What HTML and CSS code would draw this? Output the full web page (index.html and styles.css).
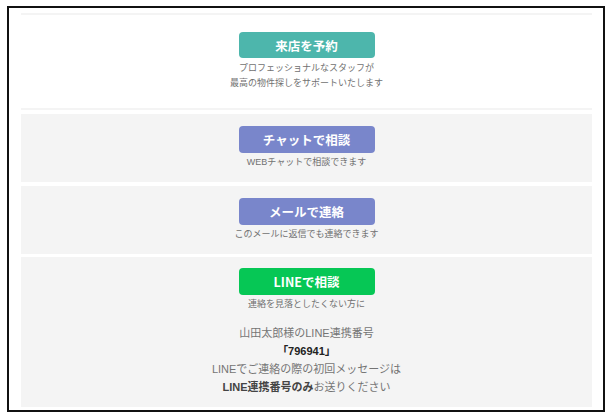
FILE: index.html
```html
<!DOCTYPE html>
<html lang="ja">
<head>
<meta charset="utf-8">
<link rel="stylesheet" href="styles.css">
</head>
<body>
<div class="frame">
  <div class="visit">
    <a class="btn btn-teal">来店を予約</a>
    <p class="sub">プロフェッショナルなスタッフが<br>最高の物件探しをサポートいたします</p>
  </div>
  <div class="cards">
    <div class="card">
      <a class="btn btn-indigo">チャットで相談</a>
      <p class="sub">WEBチャットで相談できます</p>
    </div>
    <div class="card">
      <a class="btn btn-indigo">メールで連絡</a>
      <p class="sub">このメールに返信でも連絡できます</p>
    </div>
    <div class="card">
      <a class="btn btn-line">LINEで相談</a>
      <p class="sub">連絡を見落としたくない方に</p>
      <div class="info">
        <p>山田太郎様のLINE連携番号</p>
        <p class="code">「796941」</p>
        <p>LINEでご連絡の際の初回メッセージは</p>
        <p><strong>LINE連携番号のみ</strong>お送りください</p>
      </div>
    </div>
  </div>
</div>
</body>
</html>
```
FILE: styles.css
```css
html, body {
  margin: 0;
  padding: 0;
  background: #fff;
}
body {
  font-family: "Liberation Sans", "Noto Sans CJK JP", sans-serif;
  color: #666;
}
.frame {
  margin: 6px 0 0 7px;
  width: 598px;
  height: 406px;
  box-sizing: border-box;
  border: 2px solid #111;
  padding: 5px 11px 0 12px;
}
.visit {
  border-top: 2px solid #f4f4f4;
  border-bottom: 2px solid #f4f4f4;
  padding: 17px 0 17px;
  display: flex;
  flex-direction: column;
  align-items: center;
}
.cards {
  margin-top: 4px;
  display: flex;
  flex-direction: column;
  gap: 3.5px;
}
.card {
  background: #f4f4f4;
  padding: 12px 0 12px;
  display: flex;
  flex-direction: column;
  align-items: center;
}
.card:last-child {
  padding: 11px 0 11px;
}
.btn {
  display: flex;
  align-items: center;
  justify-content: center;
  width: 136px;
  height: 27px;
  border-radius: 4px;
  color: #fff;
  font-weight: bold;
  font-size: 12.5px;
  font-family: "Noto Sans CJK JP", sans-serif;
  text-decoration: none;
}
.visit .btn {
  height: 26px;
}
.btn-teal { background: #4db6ac; }
.btn-indigo { background: #7986cb; }
.btn-line { background: #06c755; }
.sub {
  margin: 2px 0 0;
  font-size: 9px;
  line-height: 15px;
  text-align: center;
  color: #717171;
}
.visit .sub {
  margin-top: 3px;
}
.info {
  margin-top: 12px;
  text-align: center;
  font-size: 11px;
  line-height: 18px;
  color: #747474;
}
.info p {
  margin: 0;
}
.info strong {
  color: #444;
  font-weight: bold;
}
.code {
  font-weight: bold;
  color: #222;
}
```
